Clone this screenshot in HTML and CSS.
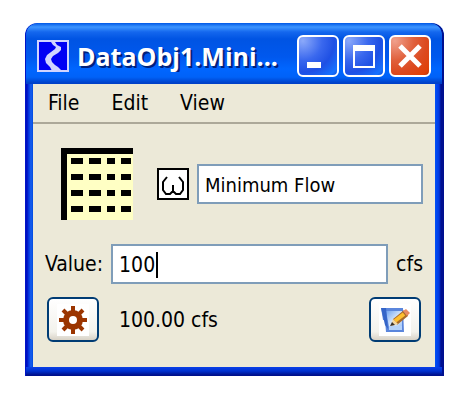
FILE: index.html
```html
<!DOCTYPE html>
<html lang="en">
<head>
<meta charset="utf-8">
<meta name="viewport" content="width=device-width, initial-scale=1">
<title>DataObj1.Minimum Flow</title>
<link rel="stylesheet" href="styles.css">
</head>
<body>
<main class="window">
  <header class="titlebar">
    <svg class="app-icon" viewBox="0 0 32 32" aria-hidden="true">
      <path fill="#d0d4ff" d="M0 0h32v32H0z"/>
      <path fill="#0000f4" d="M2 2h28v28H2z"/>
      <path fill="#d0d4ff" d="M14 2h4l2 3 4 2v3l-3 3-5 3-2 3 1 3 3 3 3 2 4 4H15l-2-4-4-4-1-4 2-4 4-3 4-3 1-2-3-2z"/>
    </svg>
    <h1 class="title">DataObj1.Mini...</h1>
    <div class="window-buttons">
      <button class="window-button" type="button" aria-label="Minimize">
        <svg viewBox="0 0 38 38"><path fill="#fff" d="M8 25h14v6H8z"/></svg>
      </button>
      <button class="window-button" type="button" aria-label="Maximize">
        <svg viewBox="0 0 38 38"><path fill="#fff" fill-rule="evenodd" d="M8 8h22v23H8zM10 14v15h18V14z"/></svg>
      </button>
      <button class="window-button close" type="button" aria-label="Close">
        <svg viewBox="0 0 38 38"><path fill="none" stroke="#fff" stroke-width="5" d="M9 9l20 20M29 9L9 29"/></svg>
      </button>
    </div>
  </header>
  <nav class="menubar">
    <button class="menu" type="button">File</button>
    <button class="menu" type="button">Edit</button>
    <button class="menu" type="button">View</button>
  </nav>
  <form class="content">
    <div class="row name-row">
      <svg class="slot-icon" viewBox="0 0 72 72" aria-hidden="true">
        <path fill="#ffffc4" d="M0 0h72v72H0z"/>
        <path d="M0 0h72v6H6v66H0z"/>
        <path stroke="#000" stroke-width="6" d="M10 13h12m6 0h12m6 0h8m6 0h10M10 29h12m6 0h12m6 0h8m6 0h10M10 45h12m6 0h12m6 0h8m6 0h10M10 61h12m6 0h12m6 0h8m6 0h10"/>
      </svg>
      <label class="symbol" for="name" aria-label="Slot name">
        <svg viewBox="0 0 28 28" aria-hidden="true"><path fill="none" stroke="#000" stroke-width="2" d="M8 7L4 12v8l3 4h4l3-3v-6M20 7l4 5v8l-3 4h-4l-3-3"/></svg>
      </label>
      <input class="field" id="name" type="text" size="1" value="Minimum Flow">
    </div>
    <div class="row value-row">
      <label for="value">Value:</label>
      <div class="value-box">
        <input class="field" id="value" type="text" size="1" value="100">
        <span class="caret"></span>
      </div>
      <span>cfs</span>
    </div>
    <div class="row result-row">
      <button class="tool" type="button" aria-label="Settings">
        <svg viewBox="0 0 32 32">
          <path fill="#fff" d="M0 0h32v32H0z"/>
          <g fill="none" stroke="#9b3500">
            <circle cx="16" cy="16" r="7" stroke-width="6"/>
            <path stroke-width="4" d="M16 2v6M16 24v6M2 16h6M24 16h6M6 6l5 5M21 21l5 5M26 6l-5 5M11 21l-5 5"/>
          </g>
        </svg>
      </button>
      <output class="result" for="value">100.00 cfs</output>
      <button class="tool" type="button" aria-label="Edit notes">
        <svg viewBox="0 0 32 32">
          <defs><linearGradient id="page" x2="1" y2="1"><stop stop-color="#6fa3f0"/><stop offset=".6" stop-color="#e3effd"/><stop offset="1" stop-color="#9fc4f8"/></linearGradient></defs>
          <path fill="#fff" d="M0 0h32v32H0z"/>
          <path fill="#5b86dc" d="M2 4h22l1 24H7L6 16H4z"/>
          <path fill="url(#page)" d="M7 7h16v16H10z"/>
          <path fill="#3465c8" d="M2 4h5l2 21-3-4z"/>
          <path fill="#b5d2fb" d="M10 22h13v4H10z"/>
          <path stroke="#a96b2a" stroke-width="7" d="M16 18L27 9"/>
          <path stroke="#ffbf2f" stroke-width="4" d="M16 17L25 10"/>
          <path fill="#e98b62" d="M24 7l3-2 4 4-3 3z"/>
          <path fill="#f5d7a0" d="M14 15l5 5-7 2z"/>
          <path fill="#39302c" d="M13 18l3 3-5 1z"/>
        </svg>
      </button>
    </div>
  </form>
</main>
</body>
</html>
```
FILE: styles.css
```css
* {
  box-sizing: border-box;
}

body {
  margin: 0;
  padding: 23px 26px 23px 25px;
  background: #fff;
  color: #000;
  font: 20px/24px "DejaVu Sans Condensed", "DejaVu Sans", sans-serif;
}

button,
input {
  font: inherit;
  color: inherit;
}

svg {
  display: block;
}

.window {
  padding: 0 9px 9px 8px;
  border-radius: 12px 12px 0 0;
  background:
    linear-gradient(#0a3fe8, #0031d0 4px, #00108c 8px) bottom / 100% 9px no-repeat,
    linear-gradient(#0058e6, #3d95ff 4px, #1467ee 9px, #0054e3 16px, #0058ee 34px, #0066ff 46px, #0062f8 54px, #0040c8 60px) top / 100% 61px no-repeat,
    linear-gradient(90deg, #0010c0 2px, #0028d8 3px, #1660ee 6px, #0048e0 8px) left / 8px 100% no-repeat,
    linear-gradient(90deg, #0050f8, #0038e0 4px, #001090 6px) right / 9px 100% no-repeat;
  box-shadow: inset 1px 0 #0014c8, inset -2px 0 #001090;
}

.titlebar {
  display: flex;
  align-items: center;
  gap: 8px;
  height: 61px;
  padding: 4px 4px 0;
}

.app-icon {
  flex: none;
  width: 32px;
  height: 32px;
}

.title {
  flex: 1;
  min-width: 0;
  margin: 0;
  overflow: hidden;
  color: #fff;
  font: bold 25px/32px "Open Sans", "Noto Sans", sans-serif;
  text-shadow: 2px 2px #00217c;
  white-space: nowrap;
}

.window-buttons {
  display: flex;
  gap: 4px;
}

.window-button {
  width: 42px;
  height: 42px;
  padding: 0;
  border: 2px solid #fff;
  border-radius: 6px;
  background: radial-gradient(circle at 10% 10%, #8ba9fa, #3a68ee 40%, #1f50e4 65%, #1672ff 90%, #1450d8);
}

.window-button.close {
  background: radial-gradient(circle at 10% 10%, #f0a08c, #e0603c 40%, #dc4a20 65%, #e04008 90%, #b83408);
}

.menubar {
  display: flex;
  gap: 32px;
  padding: 7px 15px;
  border-bottom: 2px solid #aca899;
  background: #ece9d8;
}

.menu {
  padding: 0;
  border: 0;
  background: none;
  font-size: 21px;
}

.content {
  padding: 24px 12px 25px;
  background: #ece9d8;
}

.row {
  display: flex;
  align-items: center;
}

.name-row {
  gap: 8px;
  padding-left: 16px;
}

.slot-icon {
  flex: none;
  width: 72px;
  height: 72px;
  margin-right: 16px;
}

.symbol {
  flex: none;
  width: 32px;
  height: 32px;
  border: 2px solid #000;
  background: #fff;
}

.field {
  flex: 1;
  width: 100%;
  min-width: 0;
  height: 40px;
  padding: 2px 6px 0;
  border: 2px solid #7f9db9;
  border-radius: 0;
  outline: 0;
  background: #fff;
}

.value-row,
.result-row {
  font-size: 21px;
}

.value-row {
  gap: 8px;
  margin-top: 24px;
}

.value-box {
  position: relative;
  display: flex;
  flex: 1;
}

.caret {
  position: absolute;
  top: 8px;
  left: 45px;
  width: 2px;
  height: 26px;
  background: #000;
}

.result-row {
  gap: 20px;
  margin-top: 13px;
  padding: 0 2px;
}

.result {
  flex: 1;
}

.tool {
  display: grid;
  place-items: center;
  width: 52px;
  height: 45px;
  padding: 0;
  border: 2px solid #003c74;
  border-radius: 6px;
  background: linear-gradient(#fff, #f3f2ec 80%, #d8d2c6);
}

.tool svg {
  width: 32px;
  height: 32px;
}
```
